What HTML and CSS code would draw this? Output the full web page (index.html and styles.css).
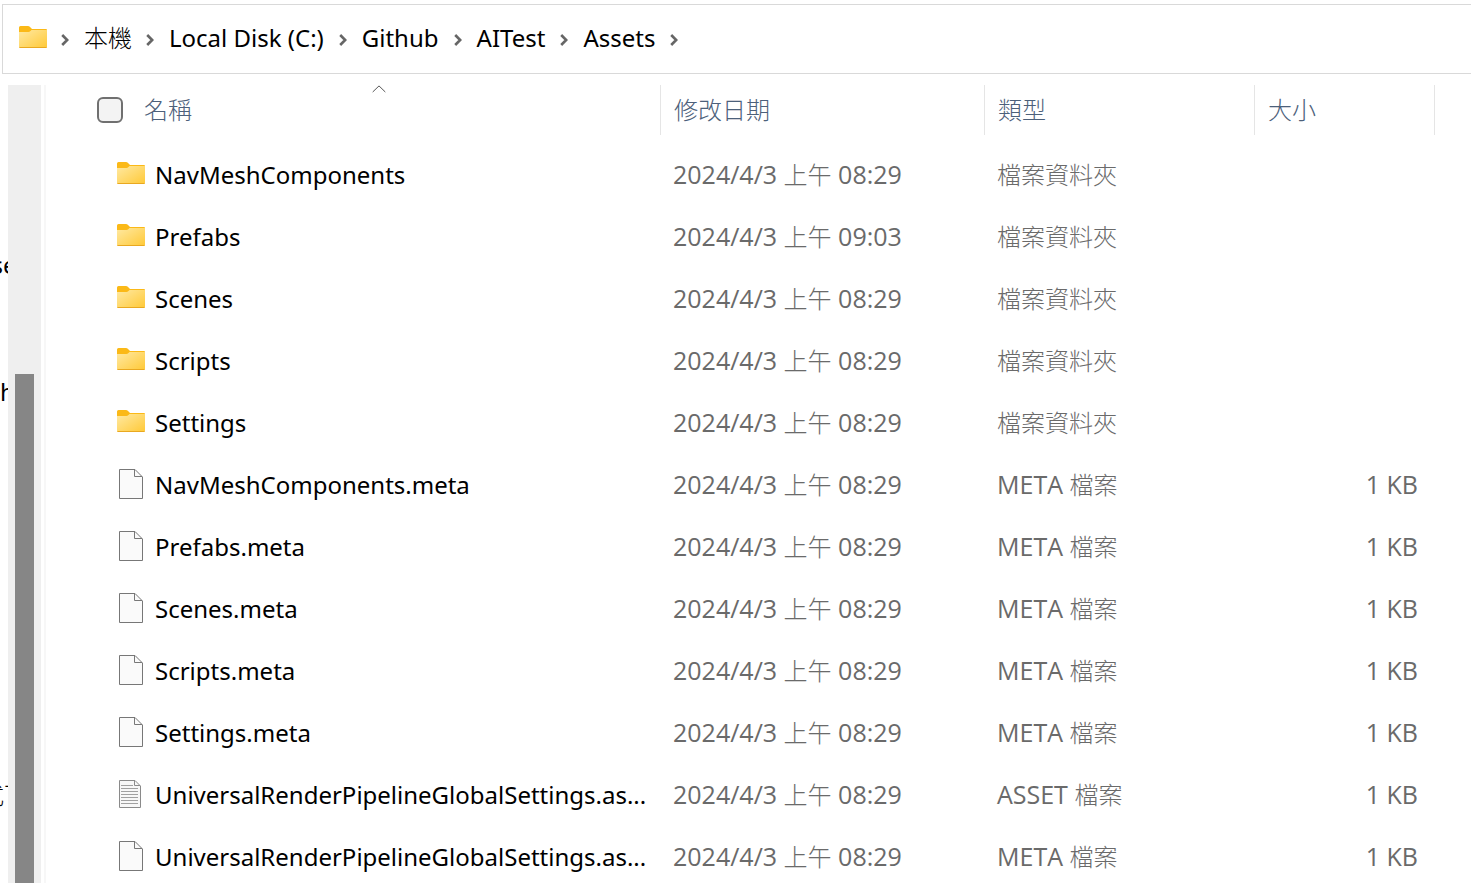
FILE: index.html
```html
<!DOCTYPE html>
<html lang="zh-Hant">
<head>
    <meta charset="UTF-8">
    <meta name="viewport" content="width=device-width, initial-scale=1.0">
    <title>Assets</title>
    <link rel="stylesheet" href="styles.css">
</head>
<body>
    <!-- Shared icons -->
    <svg class="sprite" aria-hidden="true">
        <defs>
            <linearGradient id="folder-face" x1="0" y1="0" x2="1" y2="1">
                <stop offset="0" stop-color="#ffe9a2"/>
                <stop offset="1" stop-color="#ffc937"/>
            </linearGradient>
        </defs>
        <symbol id="icon-folder" viewBox="0 0 28 22">
            <path d="M0 1.5Q0 0 1.5 0H9Q10 0 10.8 .8L13 3H27Q28 3 28 4V12H0Z" fill="#fbb917"/>
            <path d="M0 6H9.5Q10.5 6 11.2 5.3L12.5 4H28V20.5Q28 22 26.5 22H1.5Q0 22 0 20.5Z" fill="url(#folder-face)"/>
            <path d="M0 20.5Q0 22 1.5 22H26.5Q28 22 28 20.5V21H0Z" fill="#e9a820"/>
        </symbol>
        <symbol id="icon-file" viewBox="0 0 24 30">
            <path d="M.5 .5H16L23.5 8V29.5H.5Z" fill="#fafafa" stroke="#777"/>
            <path d="M15.5 .5V7.5H23" fill="none" stroke="#777"/>
        </symbol>
        <symbol id="icon-text" viewBox="0 0 24 30">
            <path d="M.5 1.5H16L21.5 7V28.5H.5Z" fill="#f7f7f7" stroke="#8a8a8a"/>
            <path d="M15.5 1.5V6.5H21" fill="none" stroke="#8a8a8a"/>
            <path d="M2 6.5H14M2 9.5H19M2 12.5H19M2 15.5H19M2 18.5H19M2 21.5H19M2 24.5H19" stroke="#a0a0a0"/>
        </symbol>
        <symbol id="icon-chevron" viewBox="0 0 8 12">
            <path d="M1.2 1L6.2 6L1.2 11" fill="none" stroke="#666" stroke-width="2.6"/>
        </symbol>
    </svg>

    <nav class="address-bar" aria-label="路徑">
        <svg class="icon-folder"><use href="#icon-folder"/></svg>
        <svg class="chevron"><use href="#icon-chevron"/></svg>
        <a href="#" class="cjk">本機</a>
        <svg class="chevron"><use href="#icon-chevron"/></svg>
        <a href="#">Local Disk (C:)</a>
        <svg class="chevron"><use href="#icon-chevron"/></svg>
        <a href="#">Github</a>
        <svg class="chevron"><use href="#icon-chevron"/></svg>
        <a href="#">AITest</a>
        <svg class="chevron"><use href="#icon-chevron"/></svg>
        <a href="#">Assets</a>
        <svg class="chevron"><use href="#icon-chevron"/></svg>
    </nav>

    <div class="explorer">
        <aside class="tree">
            <span class="tree-item">se</span>
            <span class="tree-item start">h</span>
            <span class="tree-item last">式下</span>
        </aside>
        <div class="scrollbar"><div class="thumb"></div></div>

        <main class="file-pane">
            <table class="files">
                <colgroup>
                    <col>
                    <col class="col-date">
                    <col class="col-type">
                    <col class="col-size">
                    <col class="col-rest">
                </colgroup>
                <thead>
                    <tr>
                        <th class="name-head">
                            <svg class="sort" viewBox="0 0 14 8"><path d="M.7 7L7 .9L13.3 7" fill="none" stroke="#555"/></svg>
                            <label><input type="checkbox"><span>名稱</span></label>
                        </th>
                        <th>修改日期</th>
                        <th>類型</th>
                        <th>大小</th>
                        <td></td>
                    </tr>
                </thead>
                <tbody>
                    <tr>
                        <td class="name"><div><svg class="icon-folder"><use href="#icon-folder"/></svg><span>NavMeshComponents</span></div></td>
                        <td>2024/4/3 <span class="cjk">上午</span> 08:29</td>
                        <td><span class="cjk">檔案資料夾</span></td>
                        <td class="size"></td>
                        <td></td>
                    </tr>
                    <tr>
                        <td class="name"><div><svg class="icon-folder"><use href="#icon-folder"/></svg><span>Prefabs</span></div></td>
                        <td>2024/4/3 <span class="cjk">上午</span> 09:03</td>
                        <td><span class="cjk">檔案資料夾</span></td>
                        <td class="size"></td>
                        <td></td>
                    </tr>
                    <tr>
                        <td class="name"><div><svg class="icon-folder"><use href="#icon-folder"/></svg><span>Scenes</span></div></td>
                        <td>2024/4/3 <span class="cjk">上午</span> 08:29</td>
                        <td><span class="cjk">檔案資料夾</span></td>
                        <td class="size"></td>
                        <td></td>
                    </tr>
                    <tr>
                        <td class="name"><div><svg class="icon-folder"><use href="#icon-folder"/></svg><span>Scripts</span></div></td>
                        <td>2024/4/3 <span class="cjk">上午</span> 08:29</td>
                        <td><span class="cjk">檔案資料夾</span></td>
                        <td class="size"></td>
                        <td></td>
                    </tr>
                    <tr>
                        <td class="name"><div><svg class="icon-folder"><use href="#icon-folder"/></svg><span>Settings</span></div></td>
                        <td>2024/4/3 <span class="cjk">上午</span> 08:29</td>
                        <td><span class="cjk">檔案資料夾</span></td>
                        <td class="size"></td>
                        <td></td>
                    </tr>
                    <tr>
                        <td class="name"><div><svg class="icon-file"><use href="#icon-file"/></svg><span>NavMeshComponents.meta</span></div></td>
                        <td>2024/4/3 <span class="cjk">上午</span> 08:29</td>
                        <td>META <span class="cjk">檔案</span></td>
                        <td class="size">1 KB</td>
                        <td></td>
                    </tr>
                    <tr>
                        <td class="name"><div><svg class="icon-file"><use href="#icon-file"/></svg><span>Prefabs.meta</span></div></td>
                        <td>2024/4/3 <span class="cjk">上午</span> 08:29</td>
                        <td>META <span class="cjk">檔案</span></td>
                        <td class="size">1 KB</td>
                        <td></td>
                    </tr>
                    <tr>
                        <td class="name"><div><svg class="icon-file"><use href="#icon-file"/></svg><span>Scenes.meta</span></div></td>
                        <td>2024/4/3 <span class="cjk">上午</span> 08:29</td>
                        <td>META <span class="cjk">檔案</span></td>
                        <td class="size">1 KB</td>
                        <td></td>
                    </tr>
                    <tr>
                        <td class="name"><div><svg class="icon-file"><use href="#icon-file"/></svg><span>Scripts.meta</span></div></td>
                        <td>2024/4/3 <span class="cjk">上午</span> 08:29</td>
                        <td>META <span class="cjk">檔案</span></td>
                        <td class="size">1 KB</td>
                        <td></td>
                    </tr>
                    <tr>
                        <td class="name"><div><svg class="icon-file"><use href="#icon-file"/></svg><span>Settings.meta</span></div></td>
                        <td>2024/4/3 <span class="cjk">上午</span> 08:29</td>
                        <td>META <span class="cjk">檔案</span></td>
                        <td class="size">1 KB</td>
                        <td></td>
                    </tr>
                    <tr>
                        <td class="name"><div><svg class="icon-file"><use href="#icon-text"/></svg><span>UniversalRenderPipelineGlobalSettings.as...</span></div></td>
                        <td>2024/4/3 <span class="cjk">上午</span> 08:29</td>
                        <td>ASSET <span class="cjk">檔案</span></td>
                        <td class="size">1 KB</td>
                        <td></td>
                    </tr>
                    <tr>
                        <td class="name"><div><svg class="icon-file"><use href="#icon-file"/></svg><span>UniversalRenderPipelineGlobalSettings.as...</span></div></td>
                        <td>2024/4/3 <span class="cjk">上午</span> 08:29</td>
                        <td>META <span class="cjk">檔案</span></td>
                        <td class="size">1 KB</td>
                        <td></td>
                    </tr>
                </tbody>
            </table>
        </main>
    </div>
</body>
</html>
```
FILE: styles.css
```css
:root {
    --color-text: #000;
    --color-muted: #6a6a6a;
    --color-head: #4c607a;
    --color-line: #d9d9d9;
    --color-divider: #e5e5e5;
}

* {
    box-sizing: border-box;
}

body {
    margin: 0;
    height: 100vh;
    display: flex;
    flex-direction: column;
    overflow: hidden;
    background: #fff;
    color: var(--color-text);
    font-family: "Noto Sans", "Noto Sans CJK TC", sans-serif;
    font-size: 24px;
    line-height: 32px;
}

.sprite {
    position: absolute;
    width: 0;
    height: 0;
}

.cjk {
    font-family: "Noto Sans CJK TC", sans-serif;
    font-size: 24px;
    font-weight: 300;
    line-height: 24px;
}

.icon-folder {
    width: 28px;
    height: 22px;
    margin-bottom: 4px;
    flex: none;
}

.icon-file {
    width: 24px;
    height: 30px;
    margin: 0 0 2px 2px;
    flex: none;
}

/* Address bar */
.address-bar {
    display: flex;
    align-items: center;
    flex: none;
    height: 70px;
    margin: 4px 0 11px 2px;
    padding: 0 0 2px 16px;
    border: 1px solid var(--color-line);
    border-right: none;
}

.address-bar .icon-folder {
    margin-bottom: 2px;
}

.address-bar a {
    padding: 0 1px 1px 0;
    color: inherit;
    text-decoration: none;
    white-space: nowrap;
}

.address-bar .cjk {
    padding: 0 0 2px;
}

.chevron {
    width: 8px;
    height: 12px;
    margin: 4px 15px 0 14px;
    flex: none;
}

/* Body */
.explorer {
    display: flex;
    flex: 1;
    min-height: 0;
}

.tree {
    display: flex;
    flex-direction: column;
    align-items: center;
    width: 8px;
    padding-top: 164px;
    overflow: hidden;
}

.tree-item {
    white-space: nowrap;
    margin-bottom: 95px;
}

.tree-item.start {
    align-self: flex-start;
}

.tree-item.last {
    margin-top: 276px;
    font-weight: 300;
}

.scrollbar {
    width: 33px;
    padding: 289px 7px 0;
    background: #efefef;
    flex: none;
}

.thumb {
    height: 100%;
    background: #868686;
}

.file-pane {
    flex: 1;
    min-width: 0;
    margin-left: 3px;
    padding-left: 51px;
    border-left: 2px solid #f7f7f7;
}

/* File list */
.files {
    width: 100%;
    table-layout: fixed;
    border-collapse: separate;
    border-spacing: 0;
    color: var(--color-muted);
}

.col-date { width: 324px; }
.col-type { width: 270px; }
.col-size { width: 180px; }
.col-rest { width: 36px; }

.files th {
    height: 50px;
    padding: 0 13px 3px;
    border-right: 1px solid var(--color-divider);
    color: var(--color-head);
    font-family: "Noto Sans CJK TC", sans-serif;
    font-weight: 300;
    text-align: left;
}

.files .name-head {
    position: relative;
    padding: 0;
}

.name-head label {
    display: flex;
    align-items: center;
    gap: 21px;
}

.name-head span {
    padding-bottom: 3px;
}

.name-head input {
    appearance: none;
    width: 26px;
    height: 26px;
    margin: 0;
    border: 2px solid #707070;
    border-radius: 6px;
    background: #f3f3f3;
}

.sort {
    position: absolute;
    top: 0;
    left: calc(50% - 7px);
    width: 14px;
    height: 8px;
}

.files tbody::before {
    content: "";
    display: block;
    height: 9px;
}

.files td {
    height: 62px;
    padding: 0 12px 2px;
    font-family: "Open Sans", "Noto Sans CJK TC", sans-serif;
    font-size: 25px;
    white-space: nowrap;
}

.files thead td {
    height: 50px;
}

.files .name {
    padding: 0 0 0 20px;
    color: var(--color-text);
    font-family: "Noto Sans", "Noto Sans CJK TC", sans-serif;
    font-size: 24px;
}

.name div {
    display: flex;
    align-items: center;
    gap: 10px;
}

.name .icon-file + span {
    margin-left: 2px;
}

.files .size {
    padding-right: 17px;
    text-align: right;
}
```
